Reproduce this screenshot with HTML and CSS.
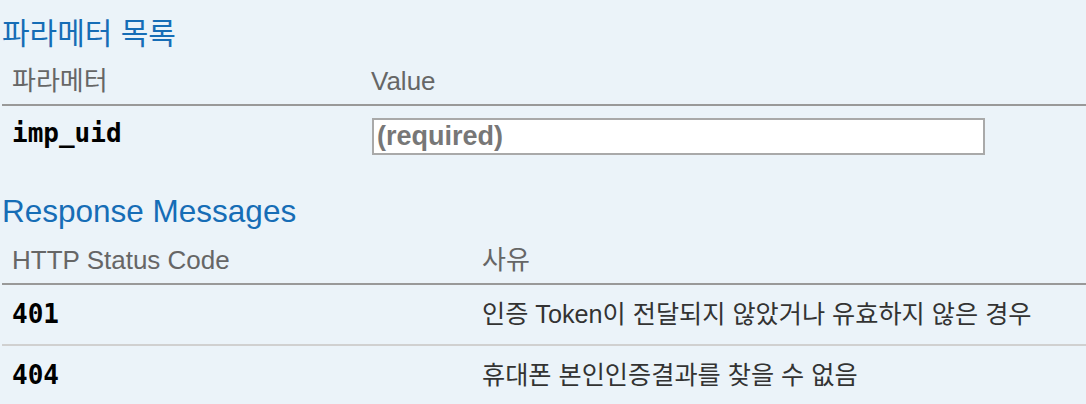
FILE: index.html
```html
<!DOCTYPE html>
<html lang="ko">
<head>
<meta charset="utf-8">
<link rel="stylesheet" href="styles.css">
</head>
<body>
<div class="content">
  <h4 class="section-title first">파라메터 목록</h4>
  <table class="params">
    <thead>
      <tr><th class="col-name">파라메터</th><th>Value</th></tr>
    </thead>
    <tbody>
      <tr>
        <td class="code"><strong>imp_uid</strong></td>
        <td><input class="param-input" type="text" placeholder="(required)"></td>
      </tr>
    </tbody>
  </table>
  <h4 class="section-title">Response Messages</h4>
  <table class="responses">
    <thead>
      <tr><th class="col-code">HTTP Status Code</th><th>사유</th></tr>
    </thead>
    <tbody>
      <tr><td class="code">401</td><td class="reason">인증 Token이 전달되지 않았거나 유효하지 않은 경우</td></tr>
      <tr><td class="code">404</td><td class="reason">휴대폰 본인인증결과를 찾을 수 없음</td></tr>
    </tbody>
  </table>
</div>
</body>
</html>
```
FILE: styles.css
```css
html, body {
  margin: 0;
  padding: 0;
  background: #ebf3f9;
}
body {
  font-family: "Liberation Sans", "Noto Sans CJK KR", sans-serif;
  color: #333;
}
.content {
  padding: 0 0 0 2px;
}
.section-title {
  margin: 24px 0 0;
  font-size: 31.5px;
  line-height: 40px;
  font-weight: normal;
  color: #166db6;
}
.section-title.first {
  margin-top: 14px;
  font-size: 30px;
}
table {
  width: 100%;
  border-collapse: collapse;
  border-spacing: 0;
}
th {
  text-align: left;
  font-weight: normal;
  color: #666;
  font-size: 26px;
  line-height: 30px;
  padding: 12px 10px 8px;
  border-bottom: 2px solid #999;
}
.params th.col-name { width: 339px; }
.responses th.col-code { width: 450px; }
.responses th { padding-top: 14px; }
td {
  padding: 12px 10px;
  vertical-align: top;
  font-size: 25px;
  line-height: 30px;
  color: #333;
}
td.code {
  font-family: "DejaVu Sans Mono", monospace;
  font-size: 26px;
  font-weight: bold;
  color: #000;
}
.responses td {
  padding: 14px 10px 15px;
  vertical-align: middle;
}
.responses td.reason {
  font-size: 25.2px;
}
.responses tbody tr + tr td {
  border-top: 2px solid #d0d0d0;
}
.param-input {
  display: block;
  box-sizing: border-box;
  width: 613px;
  height: 37px;
  margin: 0 0 0 1px;
  padding: 0 3px;
  border: 2px solid #a9a9a9;
  background: #fff;
  font-family: "Liberation Sans", sans-serif;
  font-size: 27px;
  font-weight: bold;
}
.param-input::placeholder {
  color: #777;
  opacity: 1;
}
```
